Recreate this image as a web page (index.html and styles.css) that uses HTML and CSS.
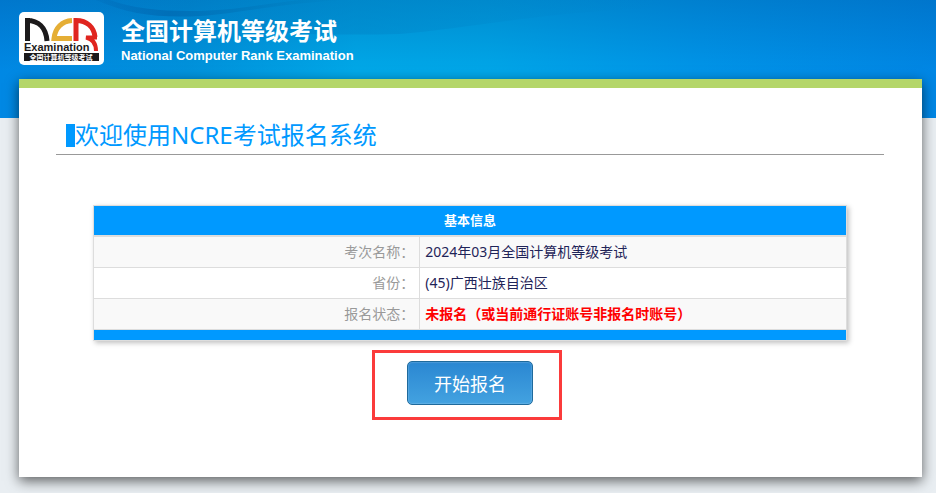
FILE: index.html
```html
<!DOCTYPE html>
<html lang="zh-CN">
<head>
  <meta charset="UTF-8" />
  <meta name="viewport" content="width=device-width, initial-scale=1.0"/>
  <title>全国计算机等级考试</title>
  <link rel="stylesheet" href="styles.css">
</head>
<body>
  <svg class="waves" viewBox="0 0 936 118" preserveAspectRatio="none" aria-hidden="true">
    <defs>
      <linearGradient id="wave-dark" x1="0" x2="1" y1="0" y2="0">
        <stop offset="0" stop-color="#0066b4" stop-opacity="0.2"/>
        <stop offset="0.3" stop-color="#0068b0" stop-opacity="0.7"/>
        <stop offset="1" stop-color="#0080c0" stop-opacity="0.2"/>
      </linearGradient>
      <linearGradient id="wave-mid" x1="0" x2="1" y1="0" y2="0">
        <stop offset="0" stop-color="#0078c4" stop-opacity="0"/>
        <stop offset="0.5" stop-color="#0080c4" stop-opacity="0.4"/>
        <stop offset="1" stop-color="#0080c4" stop-opacity="0"/>
      </linearGradient>
    </defs>
    <path fill="url(#wave-mid)" d="M60 0 C120 20 240 38 400 34 C470 28 540 12 660 8 L660 0 Z"/>
    <path fill="url(#wave-dark)" d="M96 0 C130 15 160 18 200 16 C240 13 270 5 340 0 L300 0 C260 4 235 11 190 11 C160 11 130 8 110 0 Z"/>
  </svg>

  <header class="header">
    <a class="logo" href="#" aria-label="NCRE">
      <svg viewBox="0 0 85 53" aria-hidden="true">
        <g fill="none" stroke-width="5">
          <path stroke="#1c1a1b" d="M8.500 29 V6 M8 8.500 C19 8.500 27 15 28 29"/>
          <path stroke="#e5ae35" d="M53 8.500 C43 9 36 16 35 26.500 H53"/>
          <path stroke="#e0251f" d="M57 29 V8.500 C68 8.500 75 15 76 25"/>
          <path stroke="#e0251f" stroke-width="4" d="M78 25.500 H67 C74 27 77 32 77 39"/>
        </g>
        <text class="logo-name" x="5" y="39">Examination</text>
        <rect x="5" y="41" width="75" height="8" fill="#1c1a1b"/>
        <text class="logo-sub" x="42" y="48">全国计算机等级考试</text>
      </svg>
    </a>
    <div class="brand">
      <h1>全国计算机等级考试</h1>
      <p>National Computer Rank Examination</p>
    </div>
  </header>

  <main class="page">
    <h2 class="page-title">欢迎使用NCRE考试报名系统</h2>

    <table class="info">
      <thead>
        <tr><th colspan="2">基本信息</th></tr>
      </thead>
      <tbody>
        <tr>
          <th scope="row">考次名称：</th>
          <td>2024年03月全国计算机等级考试</td>
        </tr>
        <tr>
          <th scope="row">省份：</th>
          <td>(45)广西壮族自治区</td>
        </tr>
        <tr>
          <th scope="row">报名状态：</th>
          <td class="status">未报名（或当前通行证账号非报名时账号）</td>
        </tr>
      </tbody>
      <tfoot>
        <tr><td colspan="2"></td></tr>
      </tfoot>
    </table>

    <div class="action">
      <button type="button">开始报名</button>
    </div>
  </main>
</body>
</html>
```
FILE: styles.css
```css
* {
  box-sizing: border-box;
}

body {
  position: relative;
  margin: 0;
  padding: 0 14px 16px 19px;
  background: #e9eef2;
  font-family: "Noto Sans", "Noto Sans CJK SC", sans-serif;
}

.waves {
  position: absolute;
  top: 0;
  left: 0;
  z-index: -1;
  width: 100%;
  height: 118px;
  background:
    linear-gradient(rgba(0, 80, 150, 0.3), rgba(0, 80, 150, 0) 60%),
    linear-gradient(90deg, #0088e4 0%, #0092dc 20%, #00a8e8 38%, #00a6e8 52%, #0094e8 75%, #0086e4 100%);
}

.header {
  display: flex;
  align-items: flex-start;
  gap: 17px;
  height: 79px;
  padding-top: 12px;
}

.logo {
  width: 85px;
  height: 53px;
  background: #fff;
  border-radius: 5px;
}

.logo svg {
  display: block;
  width: 100%;
}

.logo-name {
  font: bold 11px "Liberation Sans", Arial, sans-serif;
  fill: #1c1a1b;
}

.logo-sub {
  font: bold 7px "Noto Sans CJK SC", sans-serif;
  fill: #fff;
  text-anchor: middle;
}

.brand {
  padding-top: 3px;
  color: #fff;
}

.brand h1 {
  margin: 0;
  font-size: 24px;
  font-weight: bold;
  line-height: 32px;
}

.brand p {
  margin: 0;
  font: bold 13px/18px "Liberation Sans", Arial, sans-serif;
}

.page {
  min-height: 398px;
  padding: 28px 38px 56px 37px;
  background: #fff;
  border-top: 9px solid #b4d66a;
  box-shadow: 0 4px 12px rgba(0, 0, 0, 0.6);
}

.page-title {
  display: flex;
  align-items: center;
  margin: 0 0 50px;
  padding: 0 10px;
  border-bottom: 1px solid #999;
  color: #0099ff;
  font-size: 24px;
  font-weight: normal;
  line-height: 38px;
}

.page-title::before {
  content: "";
  width: 9px;
  height: 23px;
  background: #0099ff;
}

.info {
  width: 91%;
  margin: 0 auto 9px;
  border: 1px solid #ddd;
  border-collapse: separate;
  border-spacing: 0;
  box-shadow: 2px 2px 5px rgba(0, 0, 0, 0.25);
  font-size: 14px;
  line-height: 20px;
}

.info thead th {
  padding: 4px 5px 5px;
  background: #0099ff;
  border-bottom: 2px solid #ddd;
  color: #fff;
  font-size: 13px;
}

.info tbody th,
.info tbody td {
  padding: 5px;
  border-bottom: 1px solid #ddd;
}

.info tbody th {
  width: 326px;
  border-right: 1px solid #ddd;
  color: #999;
  font-weight: normal;
  text-align: right;
}

.info tbody td {
  color: #1f2458;
}

.info tbody tr:nth-child(odd) {
  background: #f9f9f9;
}

.info tbody .status {
  color: #f00;
  font-weight: bold;
}

.info tfoot td {
  height: 10px;
  padding: 0;
  background: #0099ff;
}

.action {
  position: relative;
  width: fit-content;
  margin: 0 auto;
  padding: 11px 0 15px;
}

/* red frame round the button */
.action::after {
  content: "";
  position: absolute;
  inset: 0 -29px 0 -35px;
  border: 3px solid #fb3b3b;
  pointer-events: none;
}

.action button {
  display: block;
  width: 126px;
  height: 44px;
  padding: 0;
  background: linear-gradient(#2a87d2, #43a2e0);
  border: 1px solid #1f6a9c;
  border-radius: 5px;
  box-shadow: inset 0 0 1px 1px rgba(255, 255, 255, 0.15);
  color: #fff;
  font-family: inherit;
  font-size: 18px;
  cursor: pointer;
}
```
